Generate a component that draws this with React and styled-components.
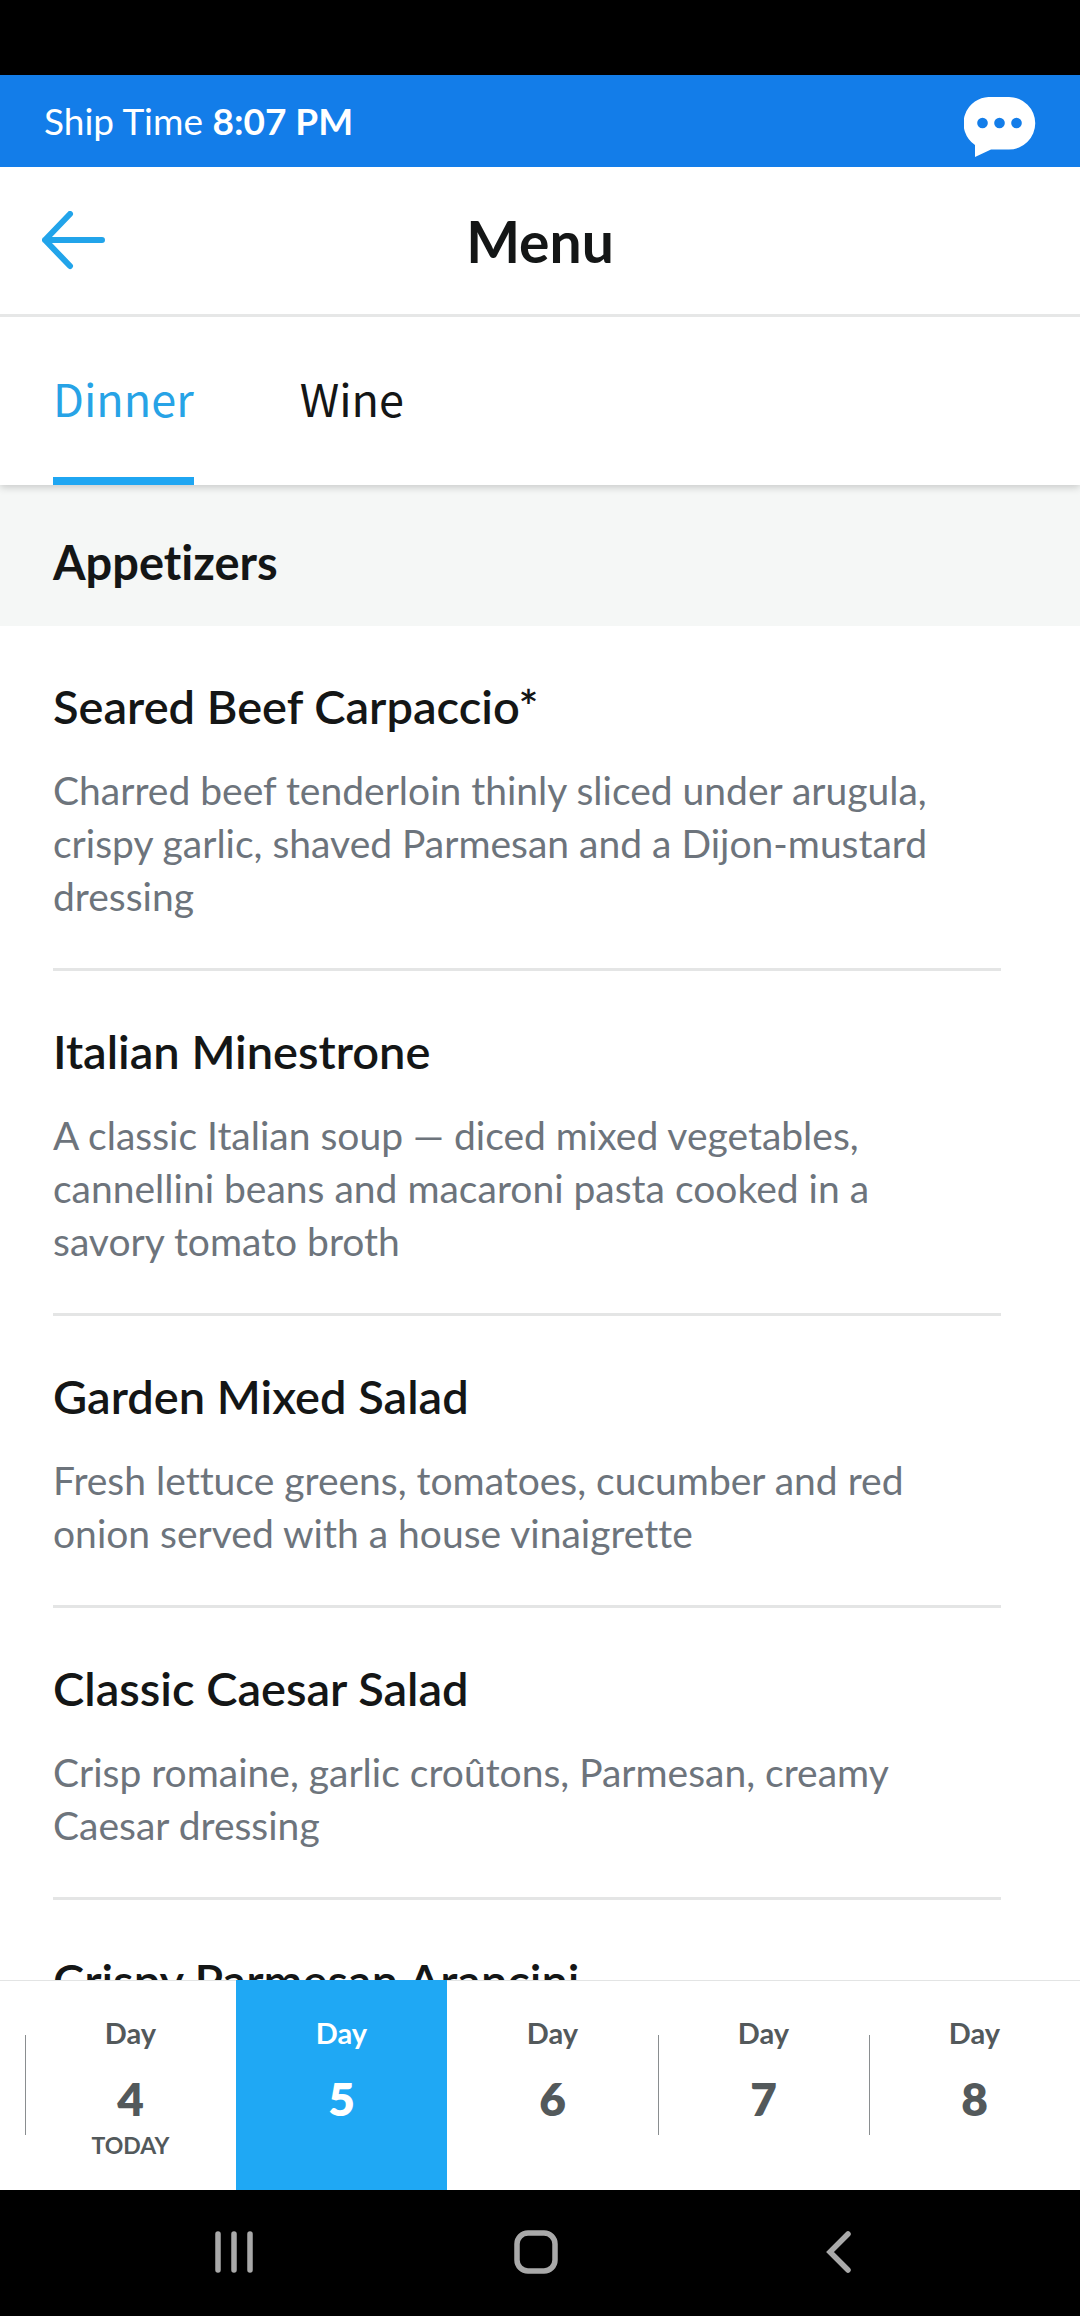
import { useState } from 'react'
import styled, { createGlobalStyle } from 'styled-components'

const tabs = ['Dinner', 'Wine']

const dishes = [
  {
    name: 'Seared Beef Carpaccio*',
    desc: 'Charred beef tenderloin thinly sliced under arugula, crispy garlic, shaved Parmesan and a Dijon-mustard dressing',
  },
  {
    name: 'Italian Minestrone',
    desc: 'A classic Italian soup — diced mixed vegetables, cannellini beans and macaroni pasta cooked in a savory tomato broth',
  },
  {
    name: 'Garden Mixed Salad',
    desc: 'Fresh lettuce greens, tomatoes, cucumber and red onion served with a house vinaigrette',
  },
  {
    name: 'Classic Caesar Salad',
    desc: 'Crisp romaine, garlic croûtons, Parmesan, creamy Caesar dressing',
  },
  { name: 'Crispy Parmesan Arancini', desc: '' },
]

const days = [4, 5, 6, 7, 8]
const today = 4

const App = () => {
  const [tab, setTab] = useState('Dinner')
  const [day, setDay] = useState(5)

  // no divider on either side of the selected day
  const hasDivider = (d) => d !== day && d !== day + 1

  return (
    <Screen>
      <GlobalStyle />
      <StatusBar />

      <ShipBar>
        <ShipTime>Ship Time <strong>8:07 PM</strong></ShipTime>
        <IconButton aria-label="Chat">
          <svg width="72" height="60" viewBox="0 0 72 60">
            <path fill="#fff" d="M27 0H45A26 26 0 0 1 45 52.500H27L11 60V48A26.300 26.300 0 0 1 27 0Z" />
            <g fill="#137de9">
              <circle cx="18.500" cy="26" r="5.300" />
              <circle cx="35.500" cy="26" r="5.300" />
              <circle cx="52.500" cy="26" r="5.300" />
            </g>
          </svg>
        </IconButton>
      </ShipBar>

      <Header>
        <IconButton aria-label="Back">
          <svg width="64" height="60" viewBox="0 0 64 60" fill="none" stroke="#22a4ea" strokeWidth="6" strokeLinecap="round" strokeLinejoin="round">
            <path d="M28 3L3 29L28 55M3 29H60" />
          </svg>
        </IconButton>
        <Title>Menu</Title>
      </Header>

      <Tabs>
        {tabs.map((t) => (
          <Tab key={t} $active={t === tab} onClick={() => setTab(t)}>{t}</Tab>
        ))}
      </Tabs>

      <Content>
        <SectionTitle>Appetizers</SectionTitle>
        <DishList>
          {dishes.map((dish) => (
            <Dish key={dish.name}>
              <DishName>{dish.name}</DishName>
              <DishDesc>{dish.desc}</DishDesc>
            </Dish>
          ))}
        </DishList>
      </Content>

      <DayBar>
        {days.map((d) => (
          <DayButton key={d} $active={d === day} $divider={hasDivider(d)} onClick={() => setDay(d)}>
            <DayLabel>Day</DayLabel>
            <DayNumber>{d}</DayNumber>
            {d === today && <TodayLabel>TODAY</TodayLabel>}
          </DayButton>
        ))}
      </DayBar>

      <NavBar>
        <NavButton aria-label="Recent apps">
          <svg width="38" height="42" viewBox="0 0 38 42" stroke="#a9a9a9" strokeWidth="5.500" strokeLinecap="round">
            <path d="M3 3V39M19 3V39M35 3V39" />
          </svg>
        </NavButton>
        <NavButton aria-label="Home">
          <svg width="44" height="44" viewBox="0 0 44 44" fill="none" stroke="#a9a9a9" strokeWidth="5.500">
            <rect x="3" y="3" width="38" height="38" rx="11" />
          </svg>
        </NavButton>
        <NavButton aria-label="Go back">
          <svg width="26" height="42" viewBox="0 0 26 42" fill="none" stroke="#a9a9a9" strokeWidth="5.500" strokeLinecap="round">
            <path d="M22 3L4 21L22 39" />
          </svg>
        </NavButton>
      </NavBar>
    </Screen>
  )
}

const GlobalStyle = createGlobalStyle`
  * {
    box-sizing: border-box;
  }

  body {
    margin: 0;
    background: #fff;
    color: #141616;
    font-family: Lato, "Open Sans", sans-serif;
    font-variant-ligatures: none;
  }

  button {
    padding: 0;
    border: 0;
    background: none;
    color: inherit;
    font-family: inherit;
    cursor: pointer;
  }

  svg {
    display: block;
  }
`

const Screen = styled.div`
  display: flex;
  flex-direction: column;
  height: 100vh;
`

const StatusBar = styled.div`
  flex: none;
  height: 75px;
  background: #000;
`

const ShipBar = styled.div`
  flex: none;
  display: flex;
  align-items: center;
  justify-content: space-between;
  height: 92px;
  padding: 12px 44px 0;
  background: #137de9;
`

const ShipTime = styled.p`
  margin: 0 0 12px;
  color: #fff;
  font-size: 37px;
  line-height: 44px;
`

const IconButton = styled.button`
  flex: none;
`

const Header = styled.header`
  flex: none;
  position: relative;
  z-index: 2;
  display: grid;
  grid-template-columns: 1fr auto 1fr;
  align-items: center;
  justify-items: start;
  height: 150px;
  padding: 0 42px;
  border-bottom: 3px solid #e6e7e7;
  background: #fff;
`

const Title = styled.h1`
  margin: 0;
  font-size: 57px;
  line-height: 68px;
  font-weight: 700;
`

const Tabs = styled.nav`
  flex: none;
  position: relative;
  z-index: 1;
  display: flex;
  gap: 106px;
  height: 168px;
  padding: 0 53px;
  background: #fff;
  box-shadow: 0 2px 8px rgba(0, 0, 0, 0.2);
`

const Tab = styled.button`
  border-bottom: 8px solid ${({ $active }) => ($active ? '#1fa6f2' : 'transparent')};
  color: ${({ $active }) => ($active ? '#27a3e6' : 'inherit')};
  font-family: "Noto Sans CJK SC", "Noto Sans", sans-serif;
  font-size: 45px;
`

const Content = styled.main`
  flex: 1;
  min-height: 0;
  overflow-y: auto;
  scrollbar-width: none;
`

const SectionTitle = styled.h2`
  margin: 0;
  padding: 50px 53px 37px;
  background: #f5f7f6;
  font-size: 47px;
  line-height: 54px;
  font-weight: 700;
`

const DishList = styled.ul`
  margin: 0;
  padding: 0 79px 0 53px;
  list-style: none;
`

const Dish = styled.li`
  padding: 53px 0 45px;
  border-bottom: 3px solid #e4e5e5;
`

const DishName = styled.h3`
  margin: 0 0 31px;
  font-size: 47px;
  line-height: 54px;
  font-weight: 600;
`

const DishDesc = styled.p`
  margin: 0;
  padding-right: 40px;
  color: #6d747c;
  font-size: 39px;
  line-height: 53px;
`

const DayBar = styled.div`
  flex: none;
  display: flex;
  height: 210px;
  padding-left: 25px;
  border-top: 1px solid #e3e4e4;
`

const DayButton = styled.button`
  position: relative;
  flex: 1;
  display: flex;
  flex-direction: column;
  align-items: center;
  margin-top: -1px;
  padding-top: 35px;
  background: ${({ $active }) => ($active ? '#1fa8f4' : 'transparent')};
  color: ${({ $active }) => ($active ? '#fff' : '#53595b')};
  font-weight: 700;

  &::before {
    content: '';
    display: ${({ $divider }) => ($divider ? 'block' : 'none')};
    position: absolute;
    top: 55px;
    left: 0;
    width: 1px;
    height: 100px;
    background: #8a8e90;
  }
`

const DayLabel = styled.span`
  font-size: 29px;
  line-height: 36px;
`

const DayNumber = styled.span`
  margin-top: 21px;
  font-size: 46px;
  line-height: 54px;
  font-weight: 800;
`

const TodayLabel = styled.span`
  font-size: 23px;
  line-height: 38px;
`

const NavBar = styled.div`
  flex: none;
  display: flex;
  height: 126px;
  padding: 0 90px 2px 83px;
  background: #000;
`

const NavButton = styled.button`
  flex: 1;
  display: flex;
  align-items: center;
  justify-content: center;
`

export default App
